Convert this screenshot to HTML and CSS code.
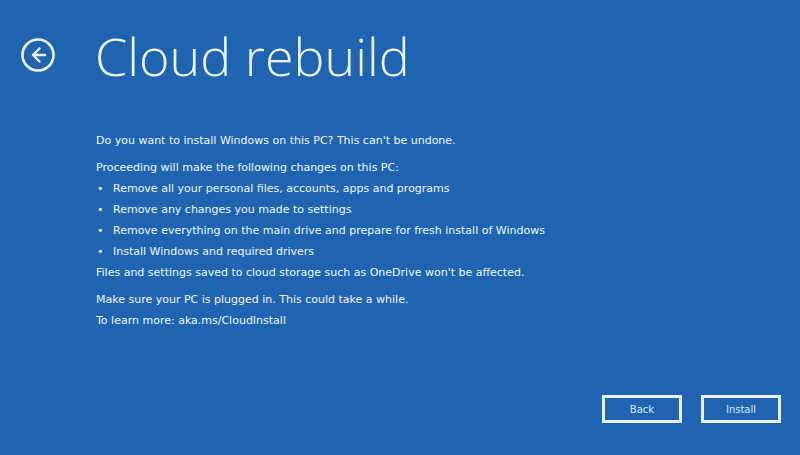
FILE: index.html
```html
<!DOCTYPE html>
<html lang="en">
<head>
    <meta charset="UTF-8">
    <title>Cloud rebuild</title>
    <link rel="stylesheet" href="styles.css">
</head>
<body>
    <div class="screen">
        <div class="header">
            <div class="back-icon">
                <svg width="36" height="36" viewBox="0 0 36 36">
                    <circle cx="18" cy="18" r="15.5" fill="none" stroke="#eef4fb" stroke-width="2.6"/>
                    <path d="M19.5 11.5 L13 18 L19.5 24.5 M13 18 H25" fill="none" stroke="#eef4fb" stroke-width="2.4" stroke-linecap="round" stroke-linejoin="round"/>
                </svg>
            </div>
            <h1 class="title">Cloud rebuild</h1>
        </div>

        <div class="content">
            <p class="para">Do you want to install Windows on this PC? This can't be undone.</p>
            <p class="para">Proceeding will make the following changes on this PC:</p>
            <ul class="changes">
                <li>Remove all your personal files, accounts, apps and programs</li>
                <li>Remove any changes you made to settings</li>
                <li>Remove everything on the main drive and prepare for fresh install of Windows</li>
                <li>Install Windows and required drivers</li>
            </ul>
            <p class="line">Files and settings saved to cloud storage such as OneDrive won't be affected.</p>
            <p class="para">Make sure your PC is plugged in. This could take a while.</p>
            <p class="line">To learn more: aka.ms/CloudInstall</p>
        </div>

        <div class="footer">
            <button class="btn">Back</button>
            <button class="btn">Install</button>
        </div>
    </div>
</body>
</html>
```

FILE: styles.css
```css
/* styles.css */

body {
    margin: 0;
    background-color: #1f64b0;
    color: #f2f6fb;
    font-family: 'DejaVu Sans', sans-serif;
}

.screen {
    height: 455px;
    display: flex;
    flex-direction: column;
    box-sizing: border-box;
}

.header {
    display: flex;
    align-items: flex-start;
    padding-top: 26px;
}

.back-icon {
    width: 36px;
    height: 36px;
    margin-left: 20px;
    margin-top: 11px;
}

.title {
    margin: 0 0 0 39px;
    font-family: 'Open Sans', sans-serif;
    font-weight: 300;
    font-size: 52px;
    line-height: 60px;
    color: #eef4fb;
}

.content {
    padding-left: 96px;
    padding-top: 38px;
    font-size: 11px;
    line-height: 21px;
    flex: 1;
}

.content p {
    margin: 0;
}

.content .para {
    margin-top: 6px;
}

.changes {
    list-style: none;
    margin: 0;
    padding: 0;
}

.changes li {
    position: relative;
    padding-left: 17px;
}

.changes li::before {
    content: "\2022";
    position: absolute;
    left: 1px;
}

.footer {
    display: flex;
    justify-content: flex-end;
    gap: 19px;
    padding: 0 19px 32px 0;
}

.btn {
    width: 80px;
    height: 28px;
    background: transparent;
    border: 3px solid #e8f0fa;
    color: #dce8f5;
    font-family: 'DejaVu Sans', sans-serif;
    font-size: 10px;
    padding: 0;
}
```
